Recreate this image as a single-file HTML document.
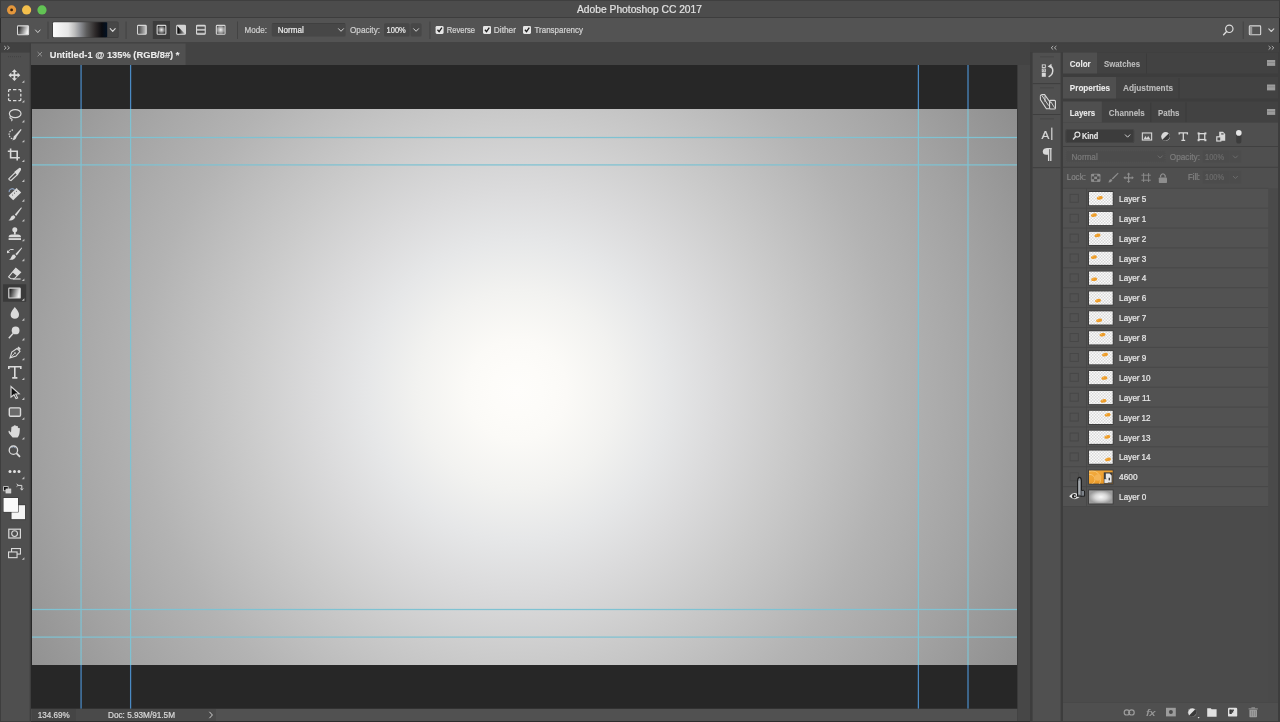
<!DOCTYPE html>
<html><head><meta charset="utf-8"><style>*{margin:0;padding:0}html,body{width:1280px;height:722px;overflow:hidden;background:#2d2d2d}</style></head>
<body><svg width="1280" height="722" viewBox="0 0 1280 722" style="position:absolute;left:0;top:0;will-change:transform;font-family:'Liberation Sans',sans-serif"><defs><linearGradient id="tp" x1="0" y1="0" x2="1" y2="0.3"><stop offset="0" stop-color="#050505"/><stop offset="1" stop-color="#f0f0f0"/></linearGradient><linearGradient id="gp" x1="0" y1="0" x2="1" y2="0">
<stop offset="0" stop-color="#fbfbfb"/><stop offset="0.28" stop-color="#e6e6e6"/><stop offset="0.4" stop-color="#bdbdbd"/>
<stop offset="0.5" stop-color="#8f9196"/><stop offset="0.62" stop-color="#5c5c5c"/><stop offset="0.78" stop-color="#2e2a2a"/>
<stop offset="0.9" stop-color="#0c0c10"/><stop offset="1" stop-color="#021224"/></linearGradient><linearGradient id="gl" x1="0" y1="0" x2="1" y2="0"><stop offset="0" stop-color="#3a3a3a"/><stop offset="1" stop-color="#c8c8c8"/></linearGradient><radialGradient id="gr"><stop offset="0" stop-color="#f0f0f0"/><stop offset="1" stop-color="#333"/></radialGradient><linearGradient id="grf" x1="0" y1="0" x2="0" y2="1"><stop offset="0" stop-color="#eee"/><stop offset="0.5" stop-color="#333"/><stop offset="1" stop-color="#eee"/></linearGradient><linearGradient id="gang" x1="0" y1="0" x2="1" y2="1"><stop offset="0" stop-color="#555"/><stop offset="1" stop-color="#e8e8e8"/></linearGradient><linearGradient id="grefl" x1="0" y1="0" x2="0" y2="1"><stop offset="0" stop-color="#e6e6e6"/><stop offset="0.3" stop-color="#2e2e2e"/><stop offset="0.5" stop-color="#d8d8d8"/><stop offset="0.72" stop-color="#2e2e2e"/><stop offset="1" stop-color="#e6e6e6"/></linearGradient><radialGradient id="gdia" r="0.72"><stop offset="0" stop-color="#f0f0f0"/><stop offset="0.55" stop-color="#8a8a8a"/><stop offset="1" stop-color="#000"/></radialGradient><linearGradient id="gang2" x1="0" y1="0" x2="1" y2="0"><stop offset="0.1" stop-color="#050505"/><stop offset="1" stop-color="#b8b8b8"/></linearGradient><radialGradient id="cg" gradientUnits="userSpaceOnUse" cx="517" cy="390" r="580"><stop offset="0.0000" stop-color="rgb(254,253,251)"/><stop offset="0.0431" stop-color="rgb(253,252,249)"/><stop offset="0.0862" stop-color="rgb(251,250,247)"/><stop offset="0.1724" stop-color="rgb(242,242,240)"/><stop offset="0.2586" stop-color="rgb(230,231,232)"/><stop offset="0.3448" stop-color="rgb(219,219,220)"/><stop offset="0.4655" stop-color="rgb(203,203,203)"/><stop offset="0.6500" stop-color="rgb(179,179,179)"/><stop offset="0.8190" stop-color="rgb(162,162,162)"/><stop offset="0.9655" stop-color="rgb(145,145,145)"/><stop offset="1.0000" stop-color="rgb(141,141,141)"/></radialGradient><linearGradient id="gt" x1="0" y1="0" x2="1" y2="0.25"><stop offset="0" stop-color="#000"/><stop offset="1" stop-color="#f2f2f2"/></linearGradient><pattern id="chk" patternUnits="userSpaceOnUse" width="3" height="3"><rect width="3" height="3" fill="#fbfbfb"/><rect width="1.5" height="1.5" fill="#d9d9d9"/><rect x="1.5" y="1.5" width="1.5" height="1.5" fill="#d9d9d9"/></pattern><radialGradient id="l0"><stop offset="0" stop-color="#f8f8f8"/><stop offset="0.5" stop-color="#d8d8d8"/><stop offset="1" stop-color="#9a9a9a"/></radialGradient><linearGradient id="or" x1="0" y1="0" x2="1" y2="1"><stop offset="0" stop-color="#f3ad43"/><stop offset="1" stop-color="#e8921c"/></linearGradient><clipPath id="c46"><rect x="1089.0" y="470.46000000000004" width="23.7" height="13.2"/></clipPath></defs><rect x="0" y="0" width="1280" height="722" fill="#2d2d2d" />
<rect x="0" y="0" width="1280" height="18" fill="#3c3c3c" />
<rect x="1" y="0.8" width="1278" height="16.2" fill="#4c4c4c" />
<rect x="0" y="17" width="1280" height="1" fill="#3d3d3d" />
<circle cx="11.6" cy="9.9" r="4.6" fill="#e4973c" stroke="none" stroke-width="1" />
<circle cx="11.6" cy="9.9" r="1.4" fill="#3a2410" stroke="none" stroke-width="1" />
<circle cx="26.6" cy="9.9" r="4.6" fill="#f3bf4c" stroke="none" stroke-width="1" />
<circle cx="42.0" cy="9.9" r="4.6" fill="#62c354" stroke="none" stroke-width="1" />
<text x="577" y="12.9" font-size="10.4" font-weight="400" fill="#e2e2e2" stroke="#e2e2e2" stroke-width="0.22" textLength="125" lengthAdjust="spacingAndGlyphs" >Adobe Photoshop CC 2017</text>
<rect x="1" y="18" width="1278" height="24.6" fill="#535353" />
<rect x="17.55" y="25.85" width="11.0" height="8.9" rx="0.8" fill="url(#tp)" stroke="#d8d8d8" stroke-width="1.1" />
<path d="M35.5 30.0 L37.8 32.6 L40.099999999999994 30.0" fill="none" stroke="#d0d0d0" stroke-width="1.0" stroke-linecap="round" stroke-linejoin="round"/>
<rect x="47.5" y="21.5" width="1.0" height="17.5" fill="#434343" />
<rect x="125.6" y="21.5" width="1.0" height="17.5" fill="#434343" />
<rect x="237" y="21.5" width="1" height="17.5" fill="#434343" />
<rect x="429.4" y="21.5" width="1.0" height="17.5" fill="#434343" />
<rect x="1242.7" y="21.5" width="1.0" height="17.5" fill="#434343" />
<rect x="52.2" y="21.4" width="66.4" height="16.5" fill="#3e3e3e" rx="1.5"/>
<rect x="53" y="22.2" width="54.2" height="15.0" fill="url(#gp)" rx="1"/>
<rect x="107.6" y="22.2" width="10.2" height="15.0" fill="#474747" />
<path d="M110.2 28.6 L112.7 31.4 L115.2 28.6" fill="none" stroke="#d8d8d8" stroke-width="1.1" stroke-linecap="round" stroke-linejoin="round"/>
<rect x="152.8" y="21" width="17.2" height="18" fill="#3c3c3c" />
<rect x="137.55" y="25.35" width="8.7" height="8.9" rx="0.8" fill="url(#gl)" stroke="#d6d6d6" stroke-width="1.1" />
<rect x="157.15" y="25.35" width="8.7" height="8.9" rx="0.8" fill="url(#gr)" stroke="#d6d6d6" stroke-width="1.1" />
<rect x="176.75" y="25.35" width="8.7" height="8.9" rx="0.8" fill="#d4d4d4" stroke="#d6d6d6" stroke-width="1.1" />
<path d="M177.3 26.0 L184.9 33.7 L177.3 33.7 Z" fill="url(#gang2)" stroke="none" stroke-width="1" />
<rect x="196.55" y="25.35" width="8.7" height="8.9" rx="0.8" fill="url(#grefl)" stroke="#d6d6d6" stroke-width="1.1" />
<rect x="216.35" y="25.35" width="8.7" height="8.9" rx="0.8" fill="url(#gdia)" stroke="#d6d6d6" stroke-width="1.1" />
<text x="244.6" y="33.1" font-size="9" font-weight="400" fill="#cfcfcf" stroke="#cfcfcf" stroke-width="0.22" textLength="22.4" lengthAdjust="spacingAndGlyphs" >Mode:</text>
<rect x="271.7" y="23.3" width="73.9" height="13.1" fill="#474747" rx="1.5"/>
<rect x="272.2" y="23.3" width="72.9" height="0.6" fill="#3c3c3c" />
<text x="277.7" y="33.1" font-size="9" font-weight="400" fill="#ececec" stroke="#ececec" stroke-width="0.22" textLength="26.0" lengthAdjust="spacingAndGlyphs" >Normal</text>
<path d="M338.5 28.7 L341 31.3 L343.5 28.7" fill="none" stroke="#d0d0d0" stroke-width="1.0" stroke-linecap="round" stroke-linejoin="round"/>
<text x="350" y="33.1" font-size="9" font-weight="400" fill="#cfcfcf" stroke="#cfcfcf" stroke-width="0.22" textLength="30" lengthAdjust="spacingAndGlyphs" >Opacity:</text>
<rect x="384" y="23.3" width="25.6" height="13.1" fill="#474747" rx="1.5"/>
<text x="386.6" y="33.1" font-size="9" font-weight="400" fill="#ececec" stroke="#ececec" stroke-width="0.22" textLength="19.2" lengthAdjust="spacingAndGlyphs" >100%</text>
<rect x="410.6" y="23.3" width="11.0" height="13.1" fill="#474747" rx="1.5"/>
<path d="M413.6 28.7 L416.1 31.3 L418.6 28.7" fill="none" stroke="#d0d0d0" stroke-width="1.0" stroke-linecap="round" stroke-linejoin="round"/>
<rect x="435.6" y="25.9" width="8.0" height="8.0" fill="#e6e6e6" rx="1.3"/>
<path d="M437.5 29.8 L439.1 31.6 L441.90000000000003 27.6" fill="none" stroke="#1e1e1e" stroke-width="1.3" />
<text x="446.7" y="33.1" font-size="9" font-weight="400" fill="#d4d4d4" stroke="#d4d4d4" stroke-width="0.22" textLength="28.3" lengthAdjust="spacingAndGlyphs" >Reverse</text>
<rect x="483" y="25.9" width="8" height="8.0" fill="#e6e6e6" rx="1.3"/>
<path d="M484.9 29.8 L486.5 31.6 L489.3 27.6" fill="none" stroke="#1e1e1e" stroke-width="1.3" />
<text x="493.8" y="33.1" font-size="9" font-weight="400" fill="#d4d4d4" stroke="#d4d4d4" stroke-width="0.22" textLength="22.2" lengthAdjust="spacingAndGlyphs" >Dither</text>
<rect x="523" y="25.9" width="8" height="8.0" fill="#e6e6e6" rx="1.3"/>
<path d="M524.9 29.8 L526.5 31.6 L529.3 27.6" fill="none" stroke="#1e1e1e" stroke-width="1.3" />
<text x="534.5" y="33.1" font-size="9" font-weight="400" fill="#d4d4d4" stroke="#d4d4d4" stroke-width="0.22" textLength="48.5" lengthAdjust="spacingAndGlyphs" >Transparency</text>
<circle cx="1229.3" cy="28.8" r="3.7" fill="none" stroke="#dcdcdc" stroke-width="1.2" />
<line x1="1226.6" y1="31.6" x2="1223.6" y2="34.8" stroke="#dcdcdc" stroke-width="1.4" stroke-linecap="round"/>
<rect x="1249.35" y="25.85" width="11.3" height="8.9" rx="0.8" fill="none" stroke="#d8d8d8" stroke-width="1.1" />
<rect x="1249.9" y="26.4" width="2.3" height="7.8" fill="#9a9a9a" />
<path d="M1268.8 28.9 L1271.3 31.5 L1273.8 28.9" fill="none" stroke="#d0d0d0" stroke-width="1.1" stroke-linecap="round" stroke-linejoin="round"/>
<rect x="0" y="43" width="31" height="679" fill="#3e3e3e" />
<rect x="1" y="43.2" width="28.7" height="9.2" fill="#414141" />
<rect x="1" y="52.5" width="28.7" height="668.5" fill="#4f4f4f" />
<path d="M4.2 46.0 L6.2 47.8 L4.2 49.599999999999994" fill="none" stroke="#bdbdbd" stroke-width="0.9" />
<path d="M7.4 46.0 L9.4 47.8 L7.4 49.599999999999994" fill="none" stroke="#bdbdbd" stroke-width="0.9" />
<rect x="8" y="56.2" width="1" height="1" fill="#424242" />
<rect x="10" y="56.2" width="1" height="1" fill="#424242" />
<rect x="12" y="56.2" width="1" height="1" fill="#424242" />
<rect x="14" y="56.2" width="1" height="1" fill="#424242" />
<rect x="16" y="56.2" width="1" height="1" fill="#424242" />
<rect x="18" y="56.2" width="1" height="1" fill="#424242" />
<rect x="20" y="56.2" width="1" height="1" fill="#424242" />
<rect x="31" y="43" width="999" height="22" fill="#434343" />
<rect x="31" y="43.6" width="154.6" height="21.4" fill="#505050" />
<line x1="37.6" y1="52" x2="42" y2="56.4" stroke="#9a9a9a" stroke-width="0.9" />
<line x1="42" y1="52" x2="37.6" y2="56.4" stroke="#9a9a9a" stroke-width="0.9" />
<text x="49.7" y="57.9" font-size="9.4" font-weight="700" fill="#ececec" stroke="#ececec" stroke-width="0.1" textLength="129.7" lengthAdjust="spacingAndGlyphs" >Untitled-1 @ 135% (RGB/8#) *</text>
<rect x="31" y="65" width="986.4" height="643.75" fill="#272727" />
<rect x="32" y="109" width="985" height="556" fill="url(#cg)" />
<rect x="80.44" y="65" width="1.25" height="44" fill="#4a8ac4" />
<rect x="80.44" y="109" width="1.25" height="556" fill="#7fc2d2" />
<rect x="80.44" y="665" width="1.25" height="43.75" fill="#4a8ac4" />
<rect x="129.97" y="65" width="1.25" height="44" fill="#4a8ac4" />
<rect x="129.97" y="109" width="1.25" height="556" fill="#7fc2d2" />
<rect x="129.97" y="665" width="1.25" height="43.75" fill="#4a8ac4" />
<rect x="917.77" y="65" width="1.25" height="44" fill="#4a8ac4" />
<rect x="917.77" y="109" width="1.25" height="556" fill="#7fc2d2" />
<rect x="917.77" y="665" width="1.25" height="43.75" fill="#4a8ac4" />
<rect x="967.38" y="65" width="1.25" height="44" fill="#4a8ac4" />
<rect x="967.38" y="109" width="1.25" height="556" fill="#7fc2d2" />
<rect x="967.38" y="665" width="1.25" height="43.75" fill="#4a8ac4" />
<rect x="32" y="136.88" width="985" height="1.25" fill="#7fc2d2" />
<rect x="32" y="164.28" width="985" height="1.25" fill="#7fc2d2" />
<rect x="32" y="608.88" width="985" height="1.25" fill="#7fc2d2" />
<rect x="32" y="636.48" width="985" height="1.25" fill="#7fc2d2" />
<rect x="1017.4" y="65" width="12.6" height="656" fill="#474747" />
<rect x="31" y="708.75" width="986.4" height="12.25" fill="#515151" />
<rect x="31.5" y="709" width="44.5" height="12" fill="#454545" />
<rect x="76" y="709" width="140" height="12" fill="#4a4a4a" />
<text x="37.8" y="718" font-size="8.2" font-weight="400" fill="#d8d8d8" stroke="#d8d8d8" stroke-width="0.22" textLength="32.0" lengthAdjust="spacingAndGlyphs" >134.69%</text>
<text x="108" y="718" font-size="8.2" font-weight="400" fill="#d8d8d8" stroke="#d8d8d8" stroke-width="0.22" textLength="67" lengthAdjust="spacingAndGlyphs" >Doc: 5.93M/91.5M</text>
<path d="M209.4 711.8 L212.4 715 L209.4 718.2" fill="none" stroke="#cfcfcf" stroke-width="1" />
<rect x="1030" y="43" width="250" height="679" fill="#3d3d3d" />
<rect x="1030" y="43.2" width="249" height="9.0" fill="#414141" />
<rect x="1032.6" y="52.6" width="28.0" height="668.4" fill="#505050" />
<path d="M1053.2 46.0 L1051.2 47.8 L1053.2 49.599999999999994" fill="none" stroke="#bdbdbd" stroke-width="0.9" />
<path d="M1056.4 46.0 L1054.4 47.8 L1056.4 49.599999999999994" fill="none" stroke="#bdbdbd" stroke-width="0.9" />
<path d="M1268.6 46.0 L1270.6 47.8 L1268.6 49.599999999999994" fill="none" stroke="#bdbdbd" stroke-width="0.9" />
<path d="M1271.8 46.0 L1273.8 47.8 L1271.8 49.599999999999994" fill="none" stroke="#bdbdbd" stroke-width="0.9" />
<rect x="1032.6" y="83.1" width="28.0" height="1.0" fill="#3e3e3e" />
<rect x="1032.6" y="114.0" width="28.0" height="1.0" fill="#3e3e3e" />
<rect x="1032.6" y="167.2" width="28.0" height="1.0" fill="#3e3e3e" />
<rect x="1040.5" y="56.4" width="1" height="1" fill="#3e3e3e" />
<rect x="1042.5" y="56.4" width="1" height="1" fill="#3e3e3e" />
<rect x="1044.5" y="56.4" width="1" height="1" fill="#3e3e3e" />
<rect x="1046.5" y="56.4" width="1" height="1" fill="#3e3e3e" />
<rect x="1048.5" y="56.4" width="1" height="1" fill="#3e3e3e" />
<rect x="1050.5" y="56.4" width="1" height="1" fill="#3e3e3e" />
<rect x="1052.5" y="56.4" width="1" height="1" fill="#3e3e3e" />
<rect x="1040.5" y="87.4" width="1" height="1" fill="#3e3e3e" />
<rect x="1042.5" y="87.4" width="1" height="1" fill="#3e3e3e" />
<rect x="1044.5" y="87.4" width="1" height="1" fill="#3e3e3e" />
<rect x="1046.5" y="87.4" width="1" height="1" fill="#3e3e3e" />
<rect x="1048.5" y="87.4" width="1" height="1" fill="#3e3e3e" />
<rect x="1050.5" y="87.4" width="1" height="1" fill="#3e3e3e" />
<rect x="1052.5" y="87.4" width="1" height="1" fill="#3e3e3e" />
<rect x="1040.5" y="118.4" width="1" height="1" fill="#3e3e3e" />
<rect x="1042.5" y="118.4" width="1" height="1" fill="#3e3e3e" />
<rect x="1044.5" y="118.4" width="1" height="1" fill="#3e3e3e" />
<rect x="1046.5" y="118.4" width="1" height="1" fill="#3e3e3e" />
<rect x="1048.5" y="118.4" width="1" height="1" fill="#3e3e3e" />
<rect x="1050.5" y="118.4" width="1" height="1" fill="#3e3e3e" />
<rect x="1052.5" y="118.4" width="1" height="1" fill="#3e3e3e" />
<rect x="1063" y="52.5" width="215" height="21.0" fill="#424242" />
<rect x="1063" y="52.5" width="34" height="21.0" fill="#4f4f4f" />
<text x="1069.8" y="66.7" font-size="9" font-weight="700" fill="#ececec" stroke="#ececec" stroke-width="0.1" textLength="20.9" lengthAdjust="spacingAndGlyphs" >Color</text>
<text x="1104" y="66.7" font-size="9" font-weight="700" fill="#bdbdbd" stroke="#bdbdbd" stroke-width="0.1" textLength="36" lengthAdjust="spacingAndGlyphs" >Swatches</text>
<rect x="1146.0" y="53.5" width="1.0" height="20.0" fill="#3b3b3b" />
<rect x="1267" y="60.0" width="8.2" height="5.9" fill="#9c9c9c" />
<rect x="1267.5" y="62.1" width="7.2" height="0.6" fill="#7e7e7e" />
<rect x="1063" y="77" width="215" height="21.5" fill="#424242" />
<rect x="1063" y="77" width="53" height="21.5" fill="#4f4f4f" />
<text x="1069.8" y="91.2" font-size="9" font-weight="700" fill="#ececec" stroke="#ececec" stroke-width="0.1" textLength="40.2" lengthAdjust="spacingAndGlyphs" >Properties</text>
<text x="1123" y="91.2" font-size="9" font-weight="700" fill="#bdbdbd" stroke="#bdbdbd" stroke-width="0.1" textLength="50" lengthAdjust="spacingAndGlyphs" >Adjustments</text>
<rect x="1178.5" y="78" width="1.0" height="20.5" fill="#3b3b3b" />
<rect x="1267" y="84.5" width="8.2" height="5.9" fill="#9c9c9c" />
<rect x="1267.5" y="86.6" width="7.2" height="0.6" fill="#7e7e7e" />
<rect x="1063" y="101.5" width="215" height="21.0" fill="#424242" />
<rect x="1063" y="101.5" width="38.8" height="21.0" fill="#4f4f4f" />
<text x="1069.8" y="115.7" font-size="9" font-weight="700" fill="#ececec" stroke="#ececec" stroke-width="0.1" textLength="25.4" lengthAdjust="spacingAndGlyphs" >Layers</text>
<text x="1108.8" y="115.7" font-size="9" font-weight="700" fill="#bdbdbd" stroke="#bdbdbd" stroke-width="0.1" textLength="36.0" lengthAdjust="spacingAndGlyphs" >Channels</text>
<rect x="1150.3" y="102.5" width="1.0" height="20.0" fill="#3b3b3b" />
<text x="1158" y="115.7" font-size="9" font-weight="700" fill="#bdbdbd" stroke="#bdbdbd" stroke-width="0.1" textLength="21.5" lengthAdjust="spacingAndGlyphs" >Paths</text>
<rect x="1185.5" y="102.5" width="1.0" height="20.0" fill="#3b3b3b" />
<rect x="1267" y="109.0" width="8.2" height="5.9" fill="#9c9c9c" />
<rect x="1267.5" y="111.1" width="7.2" height="0.6" fill="#7e7e7e" />
<rect x="1063" y="122.5" width="215" height="598.5" fill="#4f4f4f" />
<rect x="3" y="284.3" width="23.2" height="17.4" fill="#3a3a3a" />
<path d="M10.2 75.2 L18.6 75.2 M14.4 71.0 L14.4 79.4" fill="none" stroke="#dadada" stroke-width="1.7" />
<path d="M14.4 69.3 L17.0 72.10000000000001 L11.8 72.10000000000001 Z M14.4 81.10000000000001 L17.0 78.3 L11.8 78.3 Z M8.5 75.2 L11.3 77.8 L11.3 72.60000000000001 Z M20.3 75.2 L17.5 77.8 L17.5 72.60000000000001 Z" fill="#dadada" stroke="none" stroke-width="1" />
<path d="M8.6 92.02000000000001 L8.6 90.42 Q8.6 89.62 9.4 89.62 L11.0 89.62 M18.400000000000002 89.62 L20.0 89.62 Q20.8 89.62 20.8 90.42 L20.8 92.02000000000001 M20.8 98.22 L20.8 99.82000000000001 Q20.8 100.62 20.0 100.62 L18.400000000000002 100.62 M11.0 100.62 L9.4 100.62 Q8.6 100.62 8.6 99.82000000000001 L8.6 98.22" fill="none" stroke="#dadada" stroke-width="1.3" />
<path d="M13.0 89.62 L16.4 89.62 M13.0 100.62 L16.4 100.62 M8.6 93.82000000000001 L8.6 96.42 M20.8 93.82000000000001 L20.8 96.42" fill="none" stroke="#dadada" stroke-width="1.3" />
<ellipse cx="15.2" cy="113.64" rx="5.8" ry="4.0" fill="none" stroke="#dadada" stroke-width="1.2"/>
<path d="M10.5 116.04 Q9.2 118.44 11.4 118.84 Q12.8 119.44 11.4 121.04" fill="none" stroke="#dadada" stroke-width="1.1" />
<path d="M13.0 129.85999999999999 A4.3 4.3 0 1 0 14.3 138.85999999999999" fill="none" stroke="#dadada" stroke-width="1.1" stroke-dasharray="1.6 1"/>
<path d="M20.8 129.06 L15.2 135.06 Q13.2 136.06 13.4 138.06 Q13.6 140.26 11.8 140.06 Q15.6 140.85999999999999 16.6 136.85999999999999 L21.6 129.85999999999999 Z" fill="#dadada" stroke="none" stroke-width="1" />
<path d="M10.6 148.48000000000002 L10.6 157.68 L19.8 157.68 M7.8 151.28000000000003 L17.2 151.28000000000003 L17.2 160.48000000000002" fill="none" stroke="#dadada" stroke-width="1.6" />
<path d="M9.4 179.9 L8.8 178.9 L15.4 172.3 L17.6 174.5 L11.0 180.5 Z" fill="none" stroke="#dadada" stroke-width="1.1" />
<path d="M14.4 171.70000000000002 L19.2 167.9 Q21.6 167.5 21.0 170.10000000000002 L17.6 175.3 Z" fill="#dadada" stroke="none" stroke-width="1" />
<path d="M8.6 195.72 L16.6 187.92000000000002 L21.2 192.52 L13.2 200.32 Z" fill="#dadada" stroke="none" stroke-width="1" />
<circle cx="12.6" cy="195.02" r="0.55" fill="#4f4f4f" stroke="none" stroke-width="1" />
<circle cx="14.5" cy="193.12" r="0.55" fill="#4f4f4f" stroke="none" stroke-width="1" />
<circle cx="16.4" cy="191.22" r="0.55" fill="#4f4f4f" stroke="none" stroke-width="1" />
<circle cx="18.299999999999997" cy="189.32000000000002" r="0.55" fill="#4f4f4f" stroke="none" stroke-width="1" />
<path d="M9.2 192.12 A3 3 0 0 1 14.6 189.92000000000002" fill="none" stroke="#8aa0c0" stroke-width="1.1" />
<path d="M21.2 207.34 L14.8 214.54 L16.2 215.94 L21.8 207.94 Z" fill="#dadada" stroke="none" stroke-width="1" />
<path d="M13.8 215.14 Q11.2 215.14 10.6 217.74 Q10.2 219.74 8.4 220.14 Q13.4 221.34 15.4 216.94 Z" fill="#dadada" stroke="none" stroke-width="1" />
<circle cx="14.8" cy="229.76" r="2.5" fill="#dadada" stroke="none" stroke-width="1" />
<rect x="13.9" y="231.56" width="1.8" height="3.0" fill="#dadada" />
<path d="M8.6 237.35999999999999 Q8.6 234.56 11.8 234.56 L17.8 234.56 Q21.0 234.56 21.0 237.35999999999999 Z" fill="#dadada" stroke="none" stroke-width="1" />
<rect x="8.6" y="238.16" width="12.4" height="1.8" fill="#dadada" />
<path d="M21.6 247.38 L15.4 253.98 L16.8 255.38 L22.2 247.98 Z" fill="#dadada" stroke="none" stroke-width="1" />
<path d="M14.4 254.57999999999998 Q11.8 254.57999999999998 11.2 257.18 Q10.8 259.18 9.0 259.58 Q14.0 260.78 16.0 256.38 Z" fill="#dadada" stroke="none" stroke-width="1" />
<path d="M7.8 251.77999999999997 Q10.0 248.38 13.6 249.57999999999998" fill="none" stroke="#dadada" stroke-width="1.0" />
<path d="M7.0 250.17999999999998 L10.0 252.38 L7.0 253.17999999999998 Z" fill="#dadada" stroke="none" stroke-width="1" />
<path d="M9.4 275.79999999999995 L15.8 268.2 L20.6 272.2 L14.2 278.79999999999995 L11.0 278.79999999999995 L8.6 276.79999999999995 Z" fill="none" stroke="#dadada" stroke-width="1.1" />
<path d="M12.4 272.2 L15.8 268.2 L20.6 272.2 L17.0 276.0 Z" fill="#dadada" stroke="none" stroke-width="1" />
<rect x="12.8" y="278.4" width="7.8" height="1.2" fill="#dadada" />
<rect x="8.8" y="288.22" width="11.4" height="9.8" rx="0.6" fill="url(#gt)" stroke="#d6d6d6" stroke-width="1.2" />
<path d="M14.8 307.04 Q19.4 312.44 19.0 315.04 Q18.6 318.84000000000003 14.8 318.84000000000003 Q11.0 318.84000000000003 10.6 315.04 Q10.4 312.44 14.8 307.04 Z" fill="#dadada" stroke="none" stroke-width="1" />
<circle cx="15.6" cy="330.46000000000004" r="3.9" fill="#dadada" stroke="none" stroke-width="1" />
<line x1="13.0" y1="333.46000000000004" x2="8.8" y2="338.26" stroke="#dadada" stroke-width="1.4" />
<path d="M18.6 346.48 L21.0 348.88 L19.6 350.08 L17.4 347.88 Z" fill="#dadada" stroke="none" stroke-width="1" />
<path d="M17.0 348.48 L20.0 351.28000000000003 L16.0 356.08 L10.0 357.88 L11.8 352.08 Z" fill="none" stroke="#dadada" stroke-width="1.1" />
<circle cx="15.0" cy="353.08" r="0.9" fill="#dadada" stroke="none" stroke-width="1" />
<line x1="10.2" y1="357.68" x2="14.4" y2="353.68" stroke="#dadada" stroke-width="0.8" />
<path d="M8.8 369.1 L8.8 366.7 L20.8 366.7 L20.8 369.1 M14.8 366.7 L14.8 377.9 M12.2 377.9 L17.4 377.9" fill="none" stroke="#dadada" stroke-width="1.6" />
<path d="M11.0 386.52 L19.2 393.71999999999997 L15.6 393.92 L17.6 397.92 L16.0 398.52 L14.0 394.71999999999997 L11.0 397.12 Z" fill="#111" stroke="#dadada" stroke-width="1.1" />
<rect x="9.3" y="407.84" width="11.2" height="8.4" rx="1.2" fill="#6a6a6a" stroke="#dadada" stroke-width="1.4" />
<path d="M11.0 432.56 L9.0 430.56 Q7.8 431.35999999999996 9.0 433.15999999999997 L12.6 437.56 L17.6 437.56 Q19.6 435.56 19.8 430.35999999999996 L19.8 428.15999999999997 Q18.6 427.35999999999996 18.0 428.35999999999996 L17.8 426.15999999999997 Q16.8 425.35999999999996 16.0 426.15999999999997 L15.4 425.35999999999996 Q14.2 424.96 13.6 425.96 L13.0 426.56 Q11.8 426.15999999999997 11.4 427.35999999999996 Z" fill="#dadada" stroke="none" stroke-width="1" />
<circle cx="13.4" cy="450.17999999999995" r="4.2" fill="none" stroke="#dadada" stroke-width="1.3" />
<line x1="16.4" y1="453.17999999999995" x2="20.0" y2="456.97999999999996" stroke="#dadada" stroke-width="1.8" />
<path d="M11.4 447.58 A3 3 0 0 1 15.6 447.97999999999996" fill="none" stroke="#9fb4cf" stroke-width="0.8" />
<circle cx="10.0" cy="471.59999999999997" r="1.5" fill="#e2e2e2" stroke="none" stroke-width="1" />
<circle cx="14.5" cy="471.59999999999997" r="1.5" fill="#e2e2e2" stroke="none" stroke-width="1" />
<circle cx="19.0" cy="471.59999999999997" r="1.5" fill="#e2e2e2" stroke="none" stroke-width="1" />
<path d="M24.4 80.2 L21.8 82.80000000000001 L24.4 82.80000000000001 Z" fill="#bfbfbf" stroke="none" stroke-width="1" />
<path d="M24.4 100.02000000000001 L21.8 102.62000000000002 L24.4 102.62000000000002 Z" fill="#bfbfbf" stroke="none" stroke-width="1" />
<path d="M24.4 119.84 L21.8 122.44000000000001 L24.4 122.44000000000001 Z" fill="#bfbfbf" stroke="none" stroke-width="1" />
<path d="M24.4 139.66 L21.8 142.26 L24.4 142.26 Z" fill="#bfbfbf" stroke="none" stroke-width="1" />
<path d="M24.4 159.48000000000002 L21.8 162.08 L24.4 162.08 Z" fill="#bfbfbf" stroke="none" stroke-width="1" />
<path d="M24.4 179.3 L21.8 181.9 L24.4 181.9 Z" fill="#bfbfbf" stroke="none" stroke-width="1" />
<path d="M24.4 199.12 L21.8 201.72 L24.4 201.72 Z" fill="#bfbfbf" stroke="none" stroke-width="1" />
<path d="M24.4 218.94 L21.8 221.54 L24.4 221.54 Z" fill="#bfbfbf" stroke="none" stroke-width="1" />
<path d="M24.4 238.76 L21.8 241.35999999999999 L24.4 241.35999999999999 Z" fill="#bfbfbf" stroke="none" stroke-width="1" />
<path d="M24.4 258.58 L21.8 261.17999999999995 L24.4 261.17999999999995 Z" fill="#bfbfbf" stroke="none" stroke-width="1" />
<path d="M24.4 278.4 L21.8 280.99999999999994 L24.4 280.99999999999994 Z" fill="#bfbfbf" stroke="none" stroke-width="1" />
<path d="M24.4 298.22 L21.8 300.82 L24.4 300.82 Z" fill="#bfbfbf" stroke="none" stroke-width="1" />
<path d="M24.4 318.04 L21.8 320.64 L24.4 320.64 Z" fill="#bfbfbf" stroke="none" stroke-width="1" />
<path d="M24.4 337.86 L21.8 340.46 L24.4 340.46 Z" fill="#bfbfbf" stroke="none" stroke-width="1" />
<path d="M24.4 357.68 L21.8 360.28 L24.4 360.28 Z" fill="#bfbfbf" stroke="none" stroke-width="1" />
<path d="M24.4 377.5 L21.8 380.09999999999997 L24.4 380.09999999999997 Z" fill="#bfbfbf" stroke="none" stroke-width="1" />
<path d="M24.4 397.32 L21.8 399.91999999999996 L24.4 399.91999999999996 Z" fill="#bfbfbf" stroke="none" stroke-width="1" />
<path d="M24.4 417.14 L21.8 419.73999999999995 L24.4 419.73999999999995 Z" fill="#bfbfbf" stroke="none" stroke-width="1" />
<path d="M24.4 436.96 L21.8 439.55999999999995 L24.4 439.55999999999995 Z" fill="#bfbfbf" stroke="none" stroke-width="1" />
<path d="M24.4 476.59999999999997 L21.8 479.19999999999993 L24.4 479.19999999999993 Z" fill="#bfbfbf" stroke="none" stroke-width="1" />
<rect x="3.4" y="486.4" width="5.0" height="4.6" fill="#111" />
<rect x="3.6" y="486.6" width="4.6" height="4.2" rx="0" fill="none" stroke="#dadada" stroke-width="0.8" />
<rect x="6.05" y="489.05" width="4.7" height="3.9" rx="0" fill="#cfcfcf" stroke="#dadada" stroke-width="0.9" />
<path d="M18.0 485.4 L21.8 485.4 L21.8 489.6" fill="none" stroke="#dadada" stroke-width="1.0" />
<path d="M16.6 486.6 L18.2 485.2 L16.6 484.0" fill="none" stroke="#dadada" stroke-width="0.9" />
<path d="M23.2 488.4 L21.8 490.2 L20.4 488.4" fill="none" stroke="#dadada" stroke-width="0.9" />
<rect x="11.2" y="505.0" width="14.1" height="14.5" fill="#f4f4f4" />
<rect x="11.0" y="504.8" width="14.5" height="14.9" rx="0" fill="none" stroke="#3a3a3a" stroke-width="0.8" />
<rect x="3.6" y="498.0" width="14.4" height="13.8" fill="#fafafa" />
<rect x="3.4" y="497.8" width="14.8" height="14.2" rx="0" fill="none" stroke="#3a3a3a" stroke-width="0.8" />
<rect x="3.6" y="498.0" width="14.4" height="13.8" fill="#fafafa" />
<rect x="8.8" y="529.2" width="11.6" height="8.8" rx="0" fill="none" stroke="#dadada" stroke-width="1.2" />
<circle cx="14.6" cy="533.6" r="2.9" fill="none" stroke="#dadada" stroke-width="1.1" />
<rect x="11.55" y="548.55" width="8.9" height="5.5" rx="0" fill="none" stroke="#dadada" stroke-width="1.1" />
<rect x="8.55" y="551.95" width="8.5" height="5.7" rx="0" fill="#4f4f4f" stroke="#dadada" stroke-width="1.1" />
<path d="M24.4 557.1999999999999 L21.8 559.8 L24.4 559.8 Z" fill="#bfbfbf" stroke="none" stroke-width="1" />
<rect x="1042.25" y="64.85" width="3.1" height="2.7" rx="0" fill="none" stroke="#d8d8d8" stroke-width="0.9" />
<rect x="1042.25" y="69.05" width="3.1" height="2.7" rx="0" fill="none" stroke="#d8d8d8" stroke-width="0.9" />
<rect x="1041.8" y="72.8" width="4.0" height="4.0" fill="#d8d8d8" />
<path d="M1043.2 69.4 L1044.8 70.4 L1043.2 71.4 Z" fill="#d8d8d8" stroke="none" stroke-width="1" />
<path d="M1048.6 76.8 Q1053.8 74.2 1052.6 69.0 Q1052.0 66.8 1050.4 66.2" fill="none" stroke="#d8d8d8" stroke-width="1.5" />
<path d="M1047.6 66.6 L1051.4 63.8 L1051.8 68.6 Z" fill="#d8d8d8" stroke="none" stroke-width="1" />
<path d="M1040.4 96.6 Q1040.4 94.6 1042.4 94.6 L1044.6 94.6 L1050.6 103.0" fill="none" stroke="#d8d8d8" stroke-width="1.1" />
<path d="M1040.4 96.6 L1040.4 99.6 L1046.4 108.8 L1049.4 108.8" fill="none" stroke="#d8d8d8" stroke-width="1.1" />
<line x1="1042.0" y1="95.6" x2="1048.6" y2="105.6" stroke="#d8d8d8" stroke-width="1.0" />
<line x1="1045.0" y1="96.0" x2="1045.0" y2="101.8" stroke="#d8d8d8" stroke-width="0.9" />
<rect x="1049.55" y="100.35" width="5.9" height="8.7" rx="1" fill="none" stroke="#d8d8d8" stroke-width="1.1" />
<line x1="1050.6" y1="101.4" x2="1054.6" y2="107.8" stroke="#d8d8d8" stroke-width="0.9" />
<text x="1041.6" y="139.4" font-size="11.5" font-weight="400" fill="#d8d8d8" stroke="#d8d8d8" stroke-width="0.22" textLength="7.8" lengthAdjust="spacingAndGlyphs" >A</text>
<rect x="1051.2" y="127.6" width="1.2" height="12.4" fill="#d8d8d8" />
<path d="M1048.6 148.6 L1048.6 161.0 M1050.8 148.6 L1050.8 161.0" fill="none" stroke="#d8d8d8" stroke-width="1.3" />
<path d="M1048.6 148.2 L1046.2 148.2 Q1042.8 148.4 1042.8 151.6 Q1042.8 154.8 1046.2 154.8 L1048.6 154.8 Z" fill="#d8d8d8" stroke="none" stroke-width="1" />
<rect x="1046.4" y="148.0" width="5.2" height="1.2" fill="#d8d8d8" />
<rect x="1065.5" y="129.2" width="68.7" height="13.6" fill="#3c3c3c" rx="1.5"/>
<rect x="1065.9" y="129.6" width="67.9" height="12.8" rx="1.5" fill="none" stroke="#474747" stroke-width="0.8" />
<circle cx="1077.4" cy="134.6" r="2.5" fill="none" stroke="#e0e0e0" stroke-width="1.1" />
<line x1="1075.6" y1="136.6" x2="1073.0" y2="139.4" stroke="#e0e0e0" stroke-width="1.4" />
<text x="1082" y="138.9" font-size="9" font-weight="700" fill="#ececec" stroke="#ececec" stroke-width="0.1" textLength="16.3" lengthAdjust="spacingAndGlyphs" >Kind</text>
<path d="M1125.3 134.8 L1127.6 137.2 L1129.8999999999999 134.8" fill="none" stroke="#d0d0d0" stroke-width="1.0" stroke-linecap="round" stroke-linejoin="round"/>
<rect x="1142.35" y="132.95" width="9.3" height="7.1" rx="0" fill="#555" stroke="#d8d8d8" stroke-width="1.1" />
<path d="M1143.6 139.2 L1145.4 136.0 L1146.8 138.2 L1148.2 136.0 L1150.4 139.2 Z" fill="#d8d8d8" stroke="none" stroke-width="1" />
<circle cx="1165.6" cy="136.5" r="4.4" fill="#d8d8d8" stroke="none" stroke-width="1" />
<path d="M1168.7 133.4 A4.4 4.4 0 0 1 1162.5 139.6 Z" fill="#3a3a3a" stroke="none" stroke-width="1" />
<path d="M1179.2 134.6 L1179.2 132.8 L1187.4 132.8 L1187.4 134.6 M1183.3 132.8 L1183.3 140.4 M1181.4 140.4 L1185.2 140.4" fill="none" stroke="#d8d8d8" stroke-width="1.3" />
<rect x="1198.85" y="133.65" width="5.9" height="5.9" rx="0" fill="none" stroke="#d8d8d8" stroke-width="1.3" />
<rect x="1197.6" y="132.4" width="2.0" height="2.0" fill="#d8d8d8" />
<rect x="1204.4" y="132.4" width="2.0" height="2.0" fill="#d8d8d8" />
<rect x="1197.6" y="139.2" width="2.0" height="2.0" fill="#d8d8d8" />
<rect x="1204.4" y="139.2" width="2.0" height="2.0" fill="#d8d8d8" />
<path d="M1219.2 131.8 L1223.0 131.8 L1225.2 134.0 L1225.2 140.8 L1219.2 140.8 Z" fill="#d8d8d8" stroke="none" stroke-width="1" />
<rect x="1216.2" y="136.2" width="5.2" height="5.4" fill="#d8d8d8" />
<rect x="1217.4" y="137.4" width="2.8" height="3.0" fill="#4d4d4d" />
<rect x="1221.2" y="133.2" width="2.4" height="1.4" fill="#5a5a5a" />
<rect x="1236.2" y="133.0" width="5.2" height="10.6" fill="#3c3c3c" rx="2.6"/>
<circle cx="1238.8" cy="132.9" r="2.8" fill="#e6e6e6" stroke="none" stroke-width="1" />
<rect x="1063" y="146.1" width="215" height="0.9" fill="#3f3f3f" />
<rect x="1065.5" y="150.4" width="100.0" height="12.2" fill="#4c4c4c" rx="1.5"/>
<rect x="1065.85" y="150.75" width="99.3" height="11.5" rx="1.5" fill="none" stroke="#575757" stroke-width="0.7" stroke-dasharray="1 1"/>
<text x="1071.5" y="159.6" font-size="9" font-weight="400" fill="#7a7a7a" stroke="#7a7a7a" stroke-width="0.22" textLength="26.2" lengthAdjust="spacingAndGlyphs" >Normal</text>
<path d="M1158.1000000000001 155.9 L1160.2 158.1 L1162.3 155.9" fill="none" stroke="#6e6e6e" stroke-width="0.9" stroke-linecap="round" stroke-linejoin="round"/>
<text x="1169.8" y="159.6" font-size="9" font-weight="400" fill="#7c7c7c" stroke="#7c7c7c" stroke-width="0.22" textLength="30.2" lengthAdjust="spacingAndGlyphs" >Opacity:</text>
<rect x="1202.8" y="150.4" width="26.2" height="12.2" fill="#4c4c4c" />
<text x="1205.0" y="159.6" font-size="9" font-weight="400" fill="#6c6c6c" stroke="#6c6c6c" stroke-width="0.22" textLength="19.0" lengthAdjust="spacingAndGlyphs" >100%</text>
<rect x="1229.6" y="150.4" width="11.6" height="12.2" fill="#4c4c4c" />
<path d="M1233.3000000000002 155.9 L1235.4 158.1 L1237.5 155.9" fill="none" stroke="#6e6e6e" stroke-width="0.9" stroke-linecap="round" stroke-linejoin="round"/>
<rect x="1063" y="166.8" width="215" height="0.9" fill="#3f3f3f" />
<text x="1066.7" y="180.2" font-size="8.6" font-weight="400" fill="#858585" stroke="#858585" stroke-width="0.22" textLength="19.2" lengthAdjust="spacingAndGlyphs" >Lock:</text>
<rect x="1091.2" y="174.0" width="3.0" height="2.6" fill="#8e8e8e" />
<rect x="1094.2" y="174.0" width="3.0" height="2.6" fill="#4e4e4e" />
<rect x="1097.2" y="174.0" width="3.0" height="2.6" fill="#8e8e8e" />
<rect x="1091.2" y="176.6" width="3.0" height="2.6" fill="#4e4e4e" />
<rect x="1094.2" y="176.6" width="3.0" height="2.6" fill="#8e8e8e" />
<rect x="1097.2" y="176.6" width="3.0" height="2.6" fill="#4e4e4e" />
<rect x="1091.2" y="179.2" width="3.0" height="2.6" fill="#8e8e8e" />
<rect x="1094.2" y="179.2" width="3.0" height="2.6" fill="#4e4e4e" />
<rect x="1097.2" y="179.2" width="3.0" height="2.6" fill="#8e8e8e" />
<rect x="1091.4" y="174.2" width="8.6" height="7.2" rx="1.2" fill="none" stroke="#8e8e8e" stroke-width="0.8" />
<path d="M1117.8 172.8 L1111.8 178.6 L1112.8 179.6 L1118.6 173.6 Z" fill="#8e8e8e" stroke="none" stroke-width="1" />
<path d="M1111.2 179.0 Q1109.2 179.2 1108.8 181.6 L1108.4 182.4 Q1111.4 182.6 1112.4 180.2 Z" fill="#8e8e8e" stroke="none" stroke-width="1" />
<path d="M1128.6 172.6 L1130.4 174.6 L1129.2 174.6 L1129.2 177.2 L1131.8 177.2 L1131.8 176.0 L1133.8 177.8 L1131.8 179.6 L1131.8 178.4 L1129.2 178.4 L1129.2 181.0 L1130.4 181.0 L1128.6 183.0 L1126.8 181.0 L1128.0 181.0 L1128.0 178.4 L1125.4 178.4 L1125.4 179.6 L1123.4 177.8 L1125.4 176.0 L1125.4 177.2 L1128.0 177.2 L1128.0 174.6 L1126.8 174.6 Z" fill="#8e8e8e" stroke="none" stroke-width="1" />
<path d="M1141.4 175.2 L1150.8 175.2 M1143.6 173.0 L1143.6 182.0 M1141.4 180.2 L1150.8 180.2 M1148.6 173.0 L1148.6 182.0" fill="none" stroke="#8e8e8e" stroke-width="0.9" />
<rect x="1158.8" y="177.4" width="8.2" height="5.6" fill="#8e8e8e" rx="0.8"/>
<path d="M1160.6 177.6 L1160.6 175.6 Q1162.9 172.2 1165.2 175.6 L1165.2 177.6" fill="none" stroke="#8e8e8e" stroke-width="1.2" />
<text x="1188" y="180.2" font-size="8.6" font-weight="400" fill="#858585" stroke="#858585" stroke-width="0.22" textLength="12" lengthAdjust="spacingAndGlyphs" >Fill:</text>
<rect x="1202.8" y="170.8" width="26.2" height="12.7" fill="#4c4c4c" />
<text x="1205.0" y="180.2" font-size="9" font-weight="400" fill="#6c6c6c" stroke="#6c6c6c" stroke-width="0.22" textLength="19.0" lengthAdjust="spacingAndGlyphs" >100%</text>
<rect x="1229.6" y="170.8" width="11.6" height="12.7" fill="#4c4c4c" />
<path d="M1233.3000000000002 176.3 L1235.4 178.5 L1237.5 176.3" fill="none" stroke="#6e6e6e" stroke-width="0.9" stroke-linecap="round" stroke-linejoin="round"/>
<rect x="1063" y="188.3" width="205.4" height="318.24" fill="#525252" />
<rect x="1063" y="506.54" width="205.4" height="195.46" fill="#4b4b4b" />
<rect x="1086.0" y="188.3" width="0.9" height="318.24" fill="#484848" />
<rect x="1063" y="207.69" width="205.4" height="0.9" fill="#474747" />
<rect x="1088.2" y="191.2" width="25.3" height="14.8" fill="#3a3a3a" />
<rect x="1070.05" y="194.35" width="8.3" height="7.9" rx="0" fill="none" stroke="#464646" stroke-width="0.9" />
<rect x="1089.0" y="192.0" width="23.7" height="13.2" fill="url(#chk)" />
<ellipse cx="1099.8" cy="197.8" rx="3.0" ry="1.7" fill="#ee9d2a" transform="rotate(-12 1099.8 197.8)"/>
<circle cx="1098.6" cy="197.4" r="0.6" fill="#f7c56a" stroke="none" stroke-width="1" />
<text x="1119.1" y="201.9" font-size="8.2" font-weight="400" fill="#e8e8e8" stroke="#e8e8e8" stroke-width="0.22" textLength="27.2" lengthAdjust="spacingAndGlyphs" >Layer 5</text>
<rect x="1063" y="227.58" width="205.4" height="0.9" fill="#474747" />
<rect x="1088.2" y="211.09" width="25.3" height="14.8" fill="#3a3a3a" />
<rect x="1070.05" y="214.24" width="8.3" height="7.9" rx="0" fill="none" stroke="#464646" stroke-width="0.9" />
<rect x="1089.0" y="211.89" width="23.7" height="13.2" fill="url(#chk)" />
<ellipse cx="1093.9" cy="215.19" rx="3.0" ry="1.7" fill="#ee9d2a" transform="rotate(-12 1093.9 215.19)"/>
<circle cx="1092.7" cy="214.79" r="0.6" fill="#f7c56a" stroke="none" stroke-width="1" />
<text x="1119.1" y="221.79" font-size="8.2" font-weight="400" fill="#e8e8e8" stroke="#e8e8e8" stroke-width="0.22" textLength="27.2" lengthAdjust="spacingAndGlyphs" >Layer 1</text>
<rect x="1063" y="247.47" width="205.4" height="0.9" fill="#474747" />
<rect x="1088.2" y="230.98" width="25.3" height="14.8" fill="#3a3a3a" />
<rect x="1070.05" y="234.13" width="8.3" height="7.9" rx="0" fill="none" stroke="#464646" stroke-width="0.9" />
<rect x="1089.0" y="231.78" width="23.7" height="13.2" fill="url(#chk)" />
<ellipse cx="1097.5" cy="235.38" rx="3.0" ry="1.7" fill="#ee9d2a" transform="rotate(-12 1097.5 235.38)"/>
<circle cx="1096.3" cy="234.98" r="0.6" fill="#f7c56a" stroke="none" stroke-width="1" />
<text x="1119.1" y="241.68" font-size="8.2" font-weight="400" fill="#e8e8e8" stroke="#e8e8e8" stroke-width="0.22" textLength="27.2" lengthAdjust="spacingAndGlyphs" >Layer 2</text>
<rect x="1063" y="267.36" width="205.4" height="0.9" fill="#474747" />
<rect x="1088.2" y="250.87" width="25.3" height="14.8" fill="#3a3a3a" />
<rect x="1070.05" y="254.02" width="8.3" height="7.9" rx="0" fill="none" stroke="#464646" stroke-width="0.9" />
<rect x="1089.0" y="251.67" width="23.7" height="13.2" fill="url(#chk)" />
<ellipse cx="1093.9" cy="257.07" rx="3.0" ry="1.7" fill="#ee9d2a" transform="rotate(-12 1093.9 257.07)"/>
<circle cx="1092.7" cy="256.67" r="0.6" fill="#f7c56a" stroke="none" stroke-width="1" />
<text x="1119.1" y="261.57" font-size="8.2" font-weight="400" fill="#e8e8e8" stroke="#e8e8e8" stroke-width="0.22" textLength="27.2" lengthAdjust="spacingAndGlyphs" >Layer 3</text>
<rect x="1063" y="287.25" width="205.4" height="0.9" fill="#474747" />
<rect x="1088.2" y="270.76" width="25.3" height="14.8" fill="#3a3a3a" />
<rect x="1070.05" y="273.91" width="8.3" height="7.9" rx="0" fill="none" stroke="#464646" stroke-width="0.9" />
<rect x="1089.0" y="271.56" width="23.7" height="13.2" fill="url(#chk)" />
<ellipse cx="1094.2" cy="279.26" rx="3.0" ry="1.7" fill="#ee9d2a" transform="rotate(-12 1094.2 279.26)"/>
<circle cx="1093.0" cy="278.86" r="0.6" fill="#f7c56a" stroke="none" stroke-width="1" />
<text x="1119.1" y="281.46" font-size="8.2" font-weight="400" fill="#e8e8e8" stroke="#e8e8e8" stroke-width="0.22" textLength="27.2" lengthAdjust="spacingAndGlyphs" >Layer 4</text>
<rect x="1063" y="307.14" width="205.4" height="0.9" fill="#474747" />
<rect x="1088.2" y="290.65" width="25.3" height="14.8" fill="#3a3a3a" />
<rect x="1070.05" y="293.8" width="8.3" height="7.9" rx="0" fill="none" stroke="#464646" stroke-width="0.9" />
<rect x="1089.0" y="291.45" width="23.7" height="13.2" fill="url(#chk)" />
<ellipse cx="1098.0" cy="300.55" rx="3.0" ry="1.7" fill="#ee9d2a" transform="rotate(-12 1098.0 300.55)"/>
<circle cx="1096.8" cy="300.15" r="0.6" fill="#f7c56a" stroke="none" stroke-width="1" />
<text x="1119.1" y="301.35" font-size="8.2" font-weight="400" fill="#e8e8e8" stroke="#e8e8e8" stroke-width="0.22" textLength="27.2" lengthAdjust="spacingAndGlyphs" >Layer 6</text>
<rect x="1063" y="327.03" width="205.4" height="0.9" fill="#474747" />
<rect x="1088.2" y="310.54" width="25.3" height="14.8" fill="#3a3a3a" />
<rect x="1070.05" y="313.69" width="8.3" height="7.9" rx="0" fill="none" stroke="#464646" stroke-width="0.9" />
<rect x="1089.0" y="311.34" width="23.7" height="13.2" fill="url(#chk)" />
<ellipse cx="1099.1" cy="320.34" rx="3.0" ry="1.7" fill="#ee9d2a" transform="rotate(-12 1099.1 320.34)"/>
<circle cx="1097.9" cy="319.94" r="0.6" fill="#f7c56a" stroke="none" stroke-width="1" />
<text x="1119.1" y="321.24" font-size="8.2" font-weight="400" fill="#e8e8e8" stroke="#e8e8e8" stroke-width="0.22" textLength="27.2" lengthAdjust="spacingAndGlyphs" >Layer 7</text>
<rect x="1063" y="346.92" width="205.4" height="0.9" fill="#474747" />
<rect x="1088.2" y="330.43" width="25.3" height="14.8" fill="#3a3a3a" />
<rect x="1070.05" y="333.58" width="8.3" height="7.9" rx="0" fill="none" stroke="#464646" stroke-width="0.9" />
<rect x="1089.0" y="331.23" width="23.7" height="13.2" fill="url(#chk)" />
<ellipse cx="1102.5" cy="334.73" rx="3.0" ry="1.7" fill="#ee9d2a" transform="rotate(-12 1102.5 334.73)"/>
<circle cx="1101.3" cy="334.33" r="0.6" fill="#f7c56a" stroke="none" stroke-width="1" />
<text x="1119.1" y="341.13" font-size="8.2" font-weight="400" fill="#e8e8e8" stroke="#e8e8e8" stroke-width="0.22" textLength="27.2" lengthAdjust="spacingAndGlyphs" >Layer 8</text>
<rect x="1063" y="366.81" width="205.4" height="0.9" fill="#474747" />
<rect x="1088.2" y="350.32" width="25.3" height="14.8" fill="#3a3a3a" />
<rect x="1070.05" y="353.47" width="8.3" height="7.9" rx="0" fill="none" stroke="#464646" stroke-width="0.9" />
<rect x="1089.0" y="351.12" width="23.7" height="13.2" fill="url(#chk)" />
<ellipse cx="1105.0" cy="354.62" rx="3.0" ry="1.7" fill="#ee9d2a" transform="rotate(-12 1105.0 354.62)"/>
<circle cx="1103.8" cy="354.22" r="0.6" fill="#f7c56a" stroke="none" stroke-width="1" />
<text x="1119.1" y="361.02" font-size="8.2" font-weight="400" fill="#e8e8e8" stroke="#e8e8e8" stroke-width="0.22" textLength="27.2" lengthAdjust="spacingAndGlyphs" >Layer 9</text>
<rect x="1063" y="386.7" width="205.4" height="0.9" fill="#474747" />
<rect x="1088.2" y="370.21" width="25.3" height="14.8" fill="#3a3a3a" />
<rect x="1070.05" y="373.36" width="8.3" height="7.9" rx="0" fill="none" stroke="#464646" stroke-width="0.9" />
<rect x="1089.0" y="371.01" width="23.7" height="13.2" fill="url(#chk)" />
<ellipse cx="1104.4" cy="378.01" rx="3.0" ry="1.7" fill="#ee9d2a" transform="rotate(-12 1104.4 378.01)"/>
<circle cx="1103.2" cy="377.61" r="0.6" fill="#f7c56a" stroke="none" stroke-width="1" />
<text x="1119.1" y="380.91" font-size="8.2" font-weight="400" fill="#e8e8e8" stroke="#e8e8e8" stroke-width="0.22" textLength="31.5" lengthAdjust="spacingAndGlyphs" >Layer 10</text>
<rect x="1063" y="406.59" width="205.4" height="0.9" fill="#474747" />
<rect x="1088.2" y="390.1" width="25.3" height="14.8" fill="#3a3a3a" />
<rect x="1070.05" y="393.25" width="8.3" height="7.9" rx="0" fill="none" stroke="#464646" stroke-width="0.9" />
<rect x="1089.0" y="390.9" width="23.7" height="13.2" fill="url(#chk)" />
<ellipse cx="1103.5" cy="400.9" rx="3.0" ry="1.7" fill="#ee9d2a" transform="rotate(-12 1103.5 400.9)"/>
<circle cx="1102.3" cy="400.5" r="0.6" fill="#f7c56a" stroke="none" stroke-width="1" />
<text x="1119.1" y="400.8" font-size="8.2" font-weight="400" fill="#e8e8e8" stroke="#e8e8e8" stroke-width="0.22" textLength="31.5" lengthAdjust="spacingAndGlyphs" >Layer 11</text>
<rect x="1063" y="426.48" width="205.4" height="0.9" fill="#474747" />
<rect x="1088.2" y="409.99" width="25.3" height="14.8" fill="#3a3a3a" />
<rect x="1070.05" y="413.14" width="8.3" height="7.9" rx="0" fill="none" stroke="#464646" stroke-width="0.9" />
<rect x="1089.0" y="410.79" width="23.7" height="13.2" fill="url(#chk)" />
<ellipse cx="1107.6" cy="414.79" rx="3.0" ry="1.7" fill="#ee9d2a" transform="rotate(-12 1107.6 414.79)"/>
<circle cx="1106.4" cy="414.39" r="0.6" fill="#f7c56a" stroke="none" stroke-width="1" />
<text x="1119.1" y="420.69" font-size="8.2" font-weight="400" fill="#e8e8e8" stroke="#e8e8e8" stroke-width="0.22" textLength="31.5" lengthAdjust="spacingAndGlyphs" >Layer 12</text>
<rect x="1063" y="446.37" width="205.4" height="0.9" fill="#474747" />
<rect x="1088.2" y="429.88" width="25.3" height="14.8" fill="#3a3a3a" />
<rect x="1070.05" y="433.03" width="8.3" height="7.9" rx="0" fill="none" stroke="#464646" stroke-width="0.9" />
<rect x="1089.0" y="430.68" width="23.7" height="13.2" fill="url(#chk)" />
<ellipse cx="1107.3" cy="436.88" rx="3.0" ry="1.7" fill="#ee9d2a" transform="rotate(-12 1107.3 436.88)"/>
<circle cx="1106.1" cy="436.48" r="0.6" fill="#f7c56a" stroke="none" stroke-width="1" />
<text x="1119.1" y="440.58" font-size="8.2" font-weight="400" fill="#e8e8e8" stroke="#e8e8e8" stroke-width="0.22" textLength="31.5" lengthAdjust="spacingAndGlyphs" >Layer 13</text>
<rect x="1063" y="466.26" width="205.4" height="0.9" fill="#474747" />
<rect x="1088.2" y="449.77" width="25.3" height="14.8" fill="#3a3a3a" />
<rect x="1070.05" y="452.92" width="8.3" height="7.9" rx="0" fill="none" stroke="#464646" stroke-width="0.9" />
<rect x="1089.0" y="450.57" width="23.7" height="13.2" fill="url(#chk)" />
<ellipse cx="1108.0" cy="459.37" rx="3.0" ry="1.7" fill="#ee9d2a" transform="rotate(-12 1108.0 459.37)"/>
<circle cx="1106.8" cy="458.97" r="0.6" fill="#f7c56a" stroke="none" stroke-width="1" />
<text x="1119.1" y="460.47" font-size="8.2" font-weight="400" fill="#e8e8e8" stroke="#e8e8e8" stroke-width="0.22" textLength="31.5" lengthAdjust="spacingAndGlyphs" >Layer 14</text>
<rect x="1063" y="486.15" width="205.4" height="0.9" fill="#474747" />
<rect x="1088.2" y="469.66" width="25.3" height="14.8" fill="#3a3a3a" />
<rect x="1070.0" y="472.76" width="8.4" height="8.0" rx="0" fill="none" stroke="#4a4a4a" stroke-width="0.8" />
<rect x="1089.0" y="470.46" width="23.7" height="13.2" fill="url(#or)" />
<g clip-path="url(#c46)">
<circle cx="1090.0" cy="479.46000000000004" r="5.0" fill="none" stroke="#f9d18a" stroke-width="0.7" />
<circle cx="1092.0" cy="479.46000000000004" r="8.6" fill="none" stroke="#f9d18a" stroke-width="0.7" />
<circle cx="1098.0" cy="477.46000000000004" r="3.2" fill="#f4b455" stroke="none" stroke-width="1" />
</g>
<rect x="1103.8" y="472.36" width="8.9" height="11.3" fill="#3c3c3c" />
<path d="M1105.8 473.56000000000006 L1109.6 473.56000000000006 L1111.6 475.56000000000006 L1111.6 482.56000000000006 L1106.8 482.56000000000006 L1106.8 478.76000000000005 L1105.8 478.76000000000005 Z" fill="#e8e8e8" stroke="none" stroke-width="1" />
<rect x="1104.4" y="479.16" width="3.4" height="3.8" fill="#e8e8e8" />
<rect x="1108.6" y="477.76" width="1.4" height="2.6" fill="#3c3c3c" />
<text x="1119.1" y="480.36" font-size="8.2" font-weight="400" fill="#e8e8e8" stroke="#e8e8e8" stroke-width="0.22" textLength="18.5" lengthAdjust="spacingAndGlyphs" >4600</text>
<rect x="1063" y="506.04" width="205.4" height="0.9" fill="#474747" />
<rect x="1088.2" y="489.55" width="25.3" height="14.8" fill="#3a3a3a" />
<rect x="1089.0" y="490.35" width="23.7" height="13.2" fill="url(#l0)" />
<path d="M1069.2 496.25000000000006 Q1074.6 489.65000000000003 1080.6 496.25000000000006 Q1074.6 502.05 1069.2 496.25000000000006 Z" fill="#e8e8e8" stroke="none" stroke-width="1" />
<circle cx="1074.2" cy="496.25000000000006" r="2.2" fill="#262626" stroke="none" stroke-width="1" />
<circle cx="1074.9" cy="496.25000000000006" r="0.9" fill="#d8d8d8" stroke="none" stroke-width="1" />
<text x="1119.1" y="500.25" font-size="8.2" font-weight="400" fill="#e8e8e8" stroke="#e8e8e8" stroke-width="0.22" textLength="27.2" lengthAdjust="spacingAndGlyphs" >Layer 0</text>
<rect x="1268.4" y="188.3" width="9.6" height="514.0" fill="#4a4a4a" />
<rect x="1063" y="187.9" width="205.4" height="0.8" fill="#474747" />
<path d="M1077.6 496.2 L1077.6 480.6 Q1077.8 477.4 1079.5 477.4 Q1081.2 477.4 1081.4 480.6 L1081.4 496.2 Z" fill="#8d9298" stroke="#1c1c1c" stroke-width="1.2" />
<path d="M1081.4 490.4 L1083.6 490.4 Q1084.6 490.6 1084.6 492.0 L1084.6 496.2 L1081.4 496.2" fill="#7d838a" stroke="#1c1c1c" stroke-width="1.0" />
<rect x="1078.6" y="481.0" width="1.0" height="13.0" fill="#b4b8bc" />
<rect x="1063" y="702.0" width="215" height="0.8" fill="#454545" />
<rect x="1063" y="702.8" width="215" height="18.2" fill="#4f4f4f" />
<circle cx="1126.8" cy="712.4" r="2.6" fill="none" stroke="#9c9c9c" stroke-width="1.2" />
<circle cx="1131.6" cy="712.4" r="2.6" fill="none" stroke="#9c9c9c" stroke-width="1.2" />
<line x1="1128.2" y1="712.4" x2="1130.2" y2="712.4" stroke="#9c9c9c" stroke-width="1.2" />
<text x="1146.2" y="716.2" font-size="9.6" font-weight="400" fill="#9c9c9c" stroke="#9c9c9c" stroke-width="0.22" textLength="9.0" lengthAdjust="spacingAndGlyphs" font-style="italic">fx</text>
<rect x="1166.0" y="707.8" width="9.8" height="8.6" fill="#9c9c9c" />
<circle cx="1170.9" cy="712.1" r="2.0" fill="#4a4a4a" stroke="none" stroke-width="1" />
<circle cx="1192.2" cy="712.4" r="4.4" fill="#e0e0e0" stroke="none" stroke-width="1" />
<path d="M1195.3 709.3 A4.4 4.4 0 0 1 1189.1 715.5 Z" fill="#3a3a3a" stroke="none" stroke-width="1" />
<circle cx="1192.2" cy="712.4" r="4.4" fill="none" stroke="#3a3a3a" stroke-width="0.5" />
<path d="M1197.6 717.0 L1199.6 717.0 L1198.6 718.6 Z" fill="#e0e0e0" stroke="none" stroke-width="1" />
<path d="M1207.2 709.6 L1207.2 708.2 L1210.8 708.2 L1211.6 709.2 L1216.6 709.2 L1216.6 716.8 L1207.2 716.8 Z" fill="#e0e0e0" stroke="none" stroke-width="1" />
<rect x="1228.0" y="707.8" width="9.2" height="8.8" fill="#e0e0e0" rx="1.2"/>
<rect x="1229.6" y="709.6" width="4.4" height="4.4" fill="#3a3a3a" />
<rect x="1229.6" y="709.6" width="1.2" height="4.0" fill="#3a3a3a" />
<rect x="1231.8" y="710.8" width="2.6" height="3.8" fill="#e0e0e0" />
<rect x="1231.4" y="710.6" width="1.8" height="2.0" fill="#3a3a3a" />
<rect x="1249.4" y="709.8" width="7.6" height="7.4" fill="#9c9c9c" rx="0.6"/>
<rect x="1248.6" y="708.4" width="9.2" height="1.0" fill="#9c9c9c" />
<rect x="1251.4" y="707.4" width="3.6" height="1.0" fill="#9c9c9c" />
<rect x="1251.2" y="710.8" width="0.6" height="5.4" fill="#7a7a7a" />
<rect x="1253.2" y="710.8" width="0.6" height="5.4" fill="#7a7a7a" />
<rect x="1255.2" y="710.8" width="0.6" height="5.4" fill="#7a7a7a" /></svg></body></html>
